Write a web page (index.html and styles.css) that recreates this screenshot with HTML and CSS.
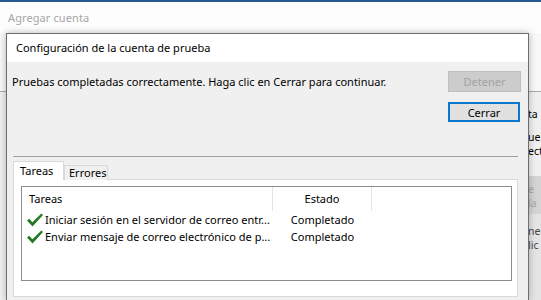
FILE: index.html
```html
<!DOCTYPE html>
<html lang="es">
<head>
<meta charset="utf-8">
<title>Agregar cuenta</title>
<link rel="stylesheet" href="styles.css">
</head>
<body>
<div class="app">
  <div class="topbar"></div>
  <div class="apptitle">Agregar cuenta</div>
  <div class="appbody">
    <div class="appbody-top"></div>
    <div class="side">
      <div class="frag f1">ta</div>
      <div class="frag f2">uel</div>
      <div class="frag f3">ect</div>
      <div class="band"><span class="fl">e la</span></div>
      <div class="lower">
        <div class="frag f4">ne</div>
        <div class="frag f5">lic</div>
      </div>
    </div>
  </div>
</div>

<div class="dialog">
  <div class="dlg-header">Configuración de la cuenta de prueba</div>
  <div class="dlg-body">
    <div class="msg-row">
      <span class="msg">Pruebas completadas correctamente. Haga clic en Cerrar para continuar.</span>
      <button class="btn btn-disabled" disabled>Detener</button>
    </div>
    <div class="btn-row">
      <button class="btn btn-default">Cerrar</button>
    </div>
    <div class="sep"></div>
    <div class="tabs">
      <div class="tab tab-active">Tareas</div>
      <div class="tab">Errores</div>
    </div>
    <div class="panel">
      <div class="list">
        <div class="lrow lhead">
          <div class="c1">Tareas</div>
          <div class="c2">Estado</div>
          <div class="c3"></div>
        </div>
        <div class="lrow item">
          <div class="c1">
            <svg class="check" width="16" height="14" viewBox="0 0 16 14"><path d="M0 7.6 L2.1 5.7 L5.4 9.2 L14.4 0.4 L16 1.9 L5.5 13.4 Z" fill="#217a21"/></svg>
            <span>Iniciar sesión en el servidor de correo entr...</span>
          </div>
          <div class="c2">Completado</div>
          <div class="c3"></div>
        </div>
        <div class="lrow item">
          <div class="c1">
            <svg class="check" width="16" height="14" viewBox="0 0 16 14"><path d="M0 7.6 L2.1 5.7 L5.4 9.2 L14.4 0.4 L16 1.9 L5.5 13.4 Z" fill="#217a21"/></svg>
            <span>Enviar mensaje de correo electrónico de p...</span>
          </div>
          <div class="c2">Completado</div>
          <div class="c3"></div>
        </div>
      </div>
    </div>
  </div>
</div>
</body>
</html>
```
FILE: styles.css
```css
* { box-sizing: border-box; }
html, body { margin: 0; padding: 0; }
body {
  width: 541px;
  height: 300px;
  overflow: hidden;
  position: relative;
  background: #ffffff;
  font-family: "Noto Sans", "Open Sans", sans-serif;
  font-size: 11px;
  color: #000;
}
.app { display: flex; flex-direction: column; height: 300px; }
.topbar { height: 2px; background: #245b8f; }
.apptitle {
  height: 31px;
  padding: 8px 0 0 8px;
  font-size: 11px;
  letter-spacing: 0.1px;
  color: #a6a6a6;
  background: #fdfdfd;
}
.appbody { flex: 1; display: flex; flex-direction: column; background: #f0f0f0; }
.appbody-top { height: 59px; background: #f8f8f8; border-bottom: 1px solid #a9a9a9; }
.side { flex: 1; display: flex; flex-direction: column; padding-left: 528px; font-size: 10.5px; }
.frag { height: 14px; line-height: 14px; white-space: nowrap; }
.f1 { margin-top: 15px; }
.f2 { margin-top: 9px; }
.f3 { margin-top: 0; }
.band {
  margin-top: 18px;
  height: 38px;
  background: #d4d4d4;
  display: flex;
  align-items: flex-end;
  padding-bottom: 4px;
  color: #a8a8a8;
}
.lower { flex: 1; background: #e4e4e4; padding-top: 10px; color: #444; }

.dialog {
  position: absolute;
  left: 6px;
  top: 33px;
  width: 523px;
  height: 267px;
  border: 1px solid #6e6e6e;
  border-bottom: none;
  background: #f0f0f0;
  box-shadow: 0 0 7px rgba(0, 0, 0, 0.28);
  display: flex;
  flex-direction: column;
}
.dlg-header {
  height: 28px;
  background: #ffffff;
  padding-left: 9px;
  line-height: 27px;
  font-size: 11px;
}
.dlg-body { display: flex; flex-direction: column; padding: 9px 7px 0 5px; }
.msg-row { display: flex; justify-content: space-between; align-items: center; height: 21px; }
.btn {
  width: 73px;
  height: 21px;
  font-family: inherit;
  font-size: 11px;
  padding: 0;
  margin: 0;
}
.btn-disabled { background: #cccccc; border: 1px solid #bfbfbf; color: #a3a3a3; }
.btn-row { display: flex; justify-content: flex-end; margin-top: 10px; }
.btn-default { background: #e1e1e1; border: 2px solid #0a78d0; color: #000; width: 72px; height: 20px; margin-right: 1px; }
.sep { height: 1px; background: #a0a0a0; margin: 34px 3px 0 1px; }
.tabs { display: flex; align-items: flex-end; margin: 4px 0 0 1px; height: 19px; position: relative; z-index: 1; }
.tab {
  height: 15px;
  width: 44px;
  border: 1px solid #d9d9d9;
  border-bottom: none;
  background: #f0f0f0;
  padding-left: 4px;
  line-height: 14px;
}
.tab-active {
  height: 19px;
  width: 51px;
  background: #ffffff;
  padding-left: 6px;
  line-height: 17px;
}
.panel {
  margin: -1px 3px 0 1px;
  height: 118px;
  background: #ffffff;
  border: 1px solid #d9d9d9;
  padding: 6px 5px 0 7px;
}
.list { height: 95px; border: 1px solid #8c8c8c; background: #fff; }
.lrow { display: flex; }
.lhead { height: 24px; align-items: center; }
.lhead .c1, .lhead .c2 { border-right: 1px solid #e5e5e5; height: 24px; line-height: 24px; }
.c1 { width: 251px; padding-left: 7px; white-space: nowrap; overflow: hidden; display: flex; align-items: center; }
.c2 { width: 99px; text-align: center; }
.c3 { flex: 1; }
.item { height: 17px; align-items: center; }
.item .c1 { padding-left: 5px; }
.check { flex: none; margin-right: 2px; }
```
